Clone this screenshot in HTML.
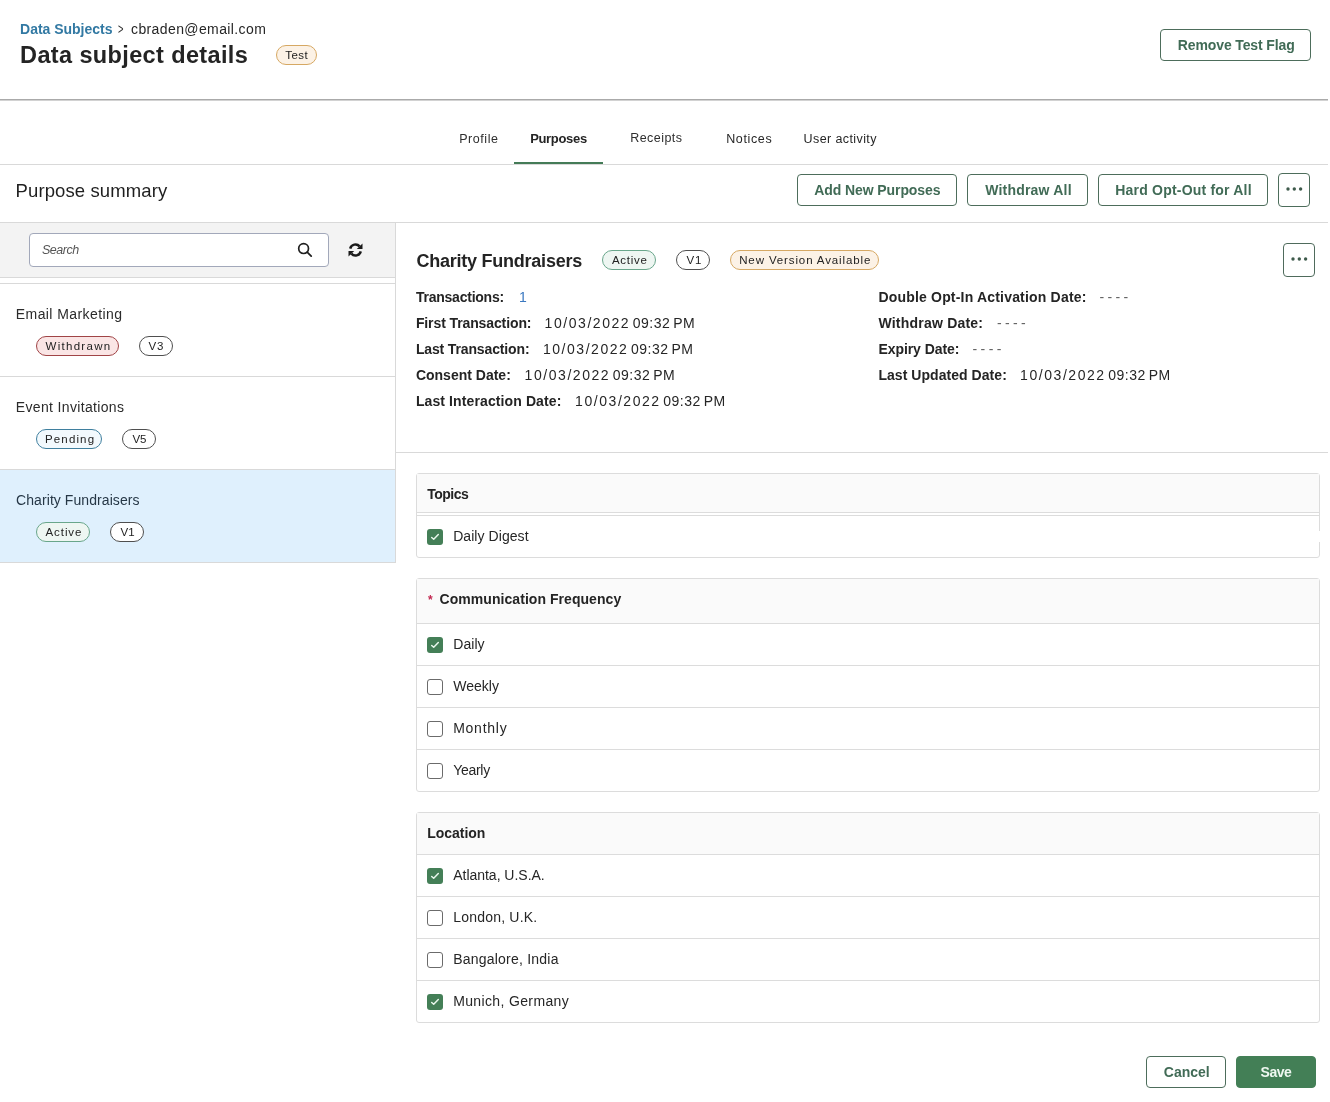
<!DOCTYPE html>
<html lang="en">
<head>
<meta charset="utf-8">
<title>Data subject details</title>
<style>
*{box-sizing:border-box;margin:0;padding:0}
html,body{width:1330px;height:1102px;background:#fff;overflow:hidden}
body{font-family:"Liberation Sans",sans-serif;color:#1c1c1c;font-size:14px;position:relative}
.abs{position:absolute}
.t{position:absolute;white-space:pre;line-height:1}
.hl{position:absolute;height:1px;background:#d9d9d9}
.btn{position:absolute;border:1px solid #4d6d5b;border-radius:4px;background:#fff}
.pill{position:absolute;height:20px;border-radius:10px;border:1px solid #4f4f4f;background:#fff}
.pill.g{border-color:#69a68b;background:#eef6f2}
.pill.r{border-color:#a04446;background:#fae5e5}
.pill.b{border-color:#3f7f9e;background:#f2f9fd}
.pill.o{border-color:#d6a863;background:#fcf2e6}
.box{position:absolute;left:416px;width:904px;border:1px solid #dcdcdc;border-radius:3px;background:#fff}
.bh{position:absolute;left:0;right:0;top:0;background:#fafafa;border-bottom:1px solid #dcdcdc}
.rowl{position:absolute;left:0;right:0;height:1px;background:#dcdcdc}
.cb{position:absolute;left:10px;width:16px;height:16px;border:1px solid #6b6b6b;border-radius:3px;background:#fff}
.cb.on{background:#447f57;border:0}
.cb.on svg{position:absolute;left:0;top:0}
#page{position:absolute;left:0;top:0;width:1330px;height:1102px;will-change:transform}
</style>
</head>
<body>
<div id="page">
<!-- header -->
<span class="t" style="left:20.1px;top:22px;font-size:14.0px;color:#3279a3;font-weight:bold;letter-spacing:-0.02px;">Data Subjects</span>
<span class="t" style="left:117.5px;top:24px;font-size:11.5px;color:#333;transform:scale(.82,1.25);transform-origin:0 50%">&gt;</span>
<span class="t" style="left:131.01px;top:22px;font-size:14px;color:#262626;letter-spacing:0.39px;">cbraden@email.com</span>
<span class="t" style="left:20.09px;top:44px;font-size:23.5px;color:#242424;font-weight:bold;letter-spacing:0.37px;">Data subject details</span>
<div class="pill o" style="left:276px;top:45px;width:41px"></div>
<span class="t" style="left:285.24px;top:50px;font-size:11.5px;color:#222;letter-spacing:0.42px;">Test</span>
<div class="btn" style="left:1160px;top:29px;width:151px;height:32px"></div>
<span class="t" style="left:1177.8px;top:38px;font-size:14.0px;color:#416b56;font-weight:bold;letter-spacing:-0.12px;">Remove Test Flag</span>
<div class="abs" style="left:0;top:99px;width:1328px;height:1px;background:#aaa"></div><div class="abs" style="left:0;top:100px;width:1328px;height:1px;background:#d2d2d2"></div>
<!-- tabs -->
<span class="t" style="left:459.2px;top:133px;font-size:12.5px;color:#2e2e2e;letter-spacing:0.56px;">Profile</span>
<span class="t" style="left:530.15px;top:132px;font-size:13.0px;color:#242424;font-weight:bold;letter-spacing:-0.32px;">Purposes</span>
<span class="t" style="left:630.2px;top:132px;font-size:12.5px;color:#2e2e2e;letter-spacing:0.45px;">Receipts</span>
<span class="t" style="left:726.2px;top:133px;font-size:12.5px;color:#262626;letter-spacing:0.63px;">Notices</span>
<span class="t" style="left:803.6px;top:133px;font-size:12.5px;color:#262626;letter-spacing:0.4px;">User activity</span>
<div class="hl" style="left:0;top:164px;width:1328px"></div>
<div class="abs" style="left:514px;top:162px;width:89px;height:2px;background:#447b57"></div>
<!-- purpose summary bar -->
<span class="t" style="left:15.56px;top:182px;font-size:18.5px;color:#1f1f1f;letter-spacing:0.11px;">Purpose summary</span>
<div class="btn" style="left:797px;top:174px;width:160px;height:32px"></div>
<span class="t" style="left:814.15px;top:183px;font-size:14.0px;color:#416b56;font-weight:bold;letter-spacing:-0.08px;">Add New Purposes</span>
<div class="btn" style="left:967px;top:174px;width:121px;height:32px"></div>
<span class="t" style="left:985.19px;top:183px;font-size:14.0px;color:#416b56;font-weight:bold;letter-spacing:0.2px;">Withdraw All</span>
<div class="btn" style="left:1098px;top:174px;width:170px;height:32px"></div>
<span class="t" style="left:1115.3px;top:183px;font-size:14.0px;color:#416b56;font-weight:bold;letter-spacing:0.2px;">Hard Opt-Out for All</span>
<div class="btn" style="left:1278px;top:173px;width:32px;height:34px"></div>
<svg class="abs" style="left:1284.7px;top:186px" width="20" height="6" viewBox="0 0 20 6"><circle cx="3" cy="3" r="1.7" fill="#3e5a4b"/><circle cx="9.3" cy="3" r="1.7" fill="#3e5a4b"/><circle cx="15.6" cy="3" r="1.7" fill="#3e5a4b"/></svg>
<div class="hl" style="left:0;top:222px;width:1328px"></div>
<!-- left panel -->
<div class="abs" style="left:0;top:223px;width:395px;height:54px;background:#f3f3f3"></div>
<div class="hl" style="left:0;top:277px;width:395px"></div>
<div class="hl" style="left:0;top:283px;width:395px"></div>
<div class="abs" style="left:395px;top:223px;width:1px;height:340px;background:#d9d9d9"></div>
<div class="abs" style="left:29px;top:233px;width:300px;height:34px;border:1px solid #a2a8ba;border-radius:4px;background:#fff"></div>
<span class="t" style="left:42.01px;top:244px;font-size:12.5px;color:#555;font-style:italic;letter-spacing:-0.49px;">Search</span>
<svg class="abs" style="left:296px;top:241px" width="18" height="18" viewBox="0 0 18 18"><circle cx="7.6" cy="7.6" r="4.9" fill="none" stroke="#1f1f1f" stroke-width="1.7"/><path d="M11.2 11.2 L15.2 15.2" stroke="#1f1f1f" stroke-width="1.7" stroke-linecap="round"/></svg>
<svg class="abs" style="left:347px;top:242px" width="17" height="16" viewBox="0 0 17 16"><g fill="none" stroke="#1a1a1a" stroke-width="2.5"><path d="M3.2 6.6 A5.4 5.4 0 0 1 12.6 4.4"/><path d="M13.8 9.4 A5.4 5.4 0 0 1 4.4 11.6"/></g><path d="M15.5 1.4 V7.1 H9.8 Z" fill="#1a1a1a"/><path d="M1.5 14.6 V8.9 H7.2 Z" fill="#1a1a1a"/></svg>
<span class="t" style="left:15.8px;top:307px;font-size:14px;color:#2b2b2b;letter-spacing:0.42px;">Email Marketing</span>
<div class="pill r" style="left:36px;top:336px;width:83px"></div>
<span class="t" style="left:45.52px;top:341px;font-size:11.5px;color:#222;letter-spacing:1.29px;">Withdrawn</span>
<div class="pill" style="left:139px;top:336px;width:34px"></div>
<span class="t" style="left:148.46px;top:341px;font-size:11.5px;color:#222;letter-spacing:0.86px;">V3</span>
<div class="hl" style="left:0;top:376px;width:395px"></div>
<span class="t" style="left:15.8px;top:400px;font-size:14px;color:#2b2b2b;letter-spacing:0.34px;">Event Invitations</span>
<div class="pill b" style="left:36px;top:429px;width:66px"></div>
<span class="t" style="left:45.0px;top:434px;font-size:11.5px;color:#222;letter-spacing:1.14px;">Pending</span>
<div class="pill" style="left:122px;top:429px;width:34px"></div>
<span class="t" style="left:132.51px;top:434px;font-size:11.5px;color:#222;letter-spacing:-0.1px;">V5</span>
<div class="hl" style="left:0;top:469px;width:395px"></div>
<div class="abs" style="left:0;top:470px;width:395px;height:92px;background:#dff0fd"></div>
<span class="t" style="left:16.08px;top:493px;font-size:14px;color:#263746;letter-spacing:0.07px;">Charity Fundraisers</span>
<div class="pill g" style="left:36px;top:522px;width:54px"></div>
<span class="t" style="left:45.5px;top:527px;font-size:11.5px;color:#222;letter-spacing:0.92px;">Active</span>
<div class="pill" style="left:110px;top:522px;width:34px"></div>
<span class="t" style="left:120.51px;top:527px;font-size:11.5px;color:#222;letter-spacing:0.05px;">V1</span>
<div class="hl" style="left:0;top:562px;width:396px"></div>
<!-- detail panel -->
<span class="t" style="left:416.48px;top:252px;font-size:18.0px;color:#242424;font-weight:bold;letter-spacing:-0.24px;">Charity Fundraisers</span>
<div class="pill g" style="left:602px;top:250px;width:54px"></div>
<span class="t" style="left:611.9px;top:255px;font-size:11.5px;color:#222;letter-spacing:0.73px;">Active</span>
<div class="pill" style="left:676px;top:250px;width:34px"></div>
<span class="t" style="left:686.51px;top:255px;font-size:11.5px;color:#222;letter-spacing:0.73px;">V1</span>
<div class="pill o" style="left:730px;top:250px;width:149px"></div>
<span class="t" style="left:739.2px;top:255px;font-size:11.5px;color:#222;letter-spacing:0.88px;">New Version Available</span>
<div class="btn" style="left:1283px;top:243px;width:32px;height:34px;border-color:#4f6b5c"></div>
<svg class="abs" style="left:1289.7px;top:256px" width="20" height="6" viewBox="0 0 20 6"><circle cx="3" cy="3" r="1.7" fill="#3e5a4b"/><circle cx="9.3" cy="3" r="1.7" fill="#3e5a4b"/><circle cx="15.6" cy="3" r="1.7" fill="#3e5a4b"/></svg>
<span class="t" style="left:415.9px;top:290px;font-size:14.0px;color:#242424;font-weight:bold;letter-spacing:-0.23px;">Transactions:</span>
<span class="t" style="left:415.9px;top:316px;font-size:14.0px;color:#242424;font-weight:bold;letter-spacing:-0.11px;">First Transaction:</span>
<span class="t" style="left:415.9px;top:342px;font-size:14.0px;color:#242424;font-weight:bold;letter-spacing:-0.14px;">Last Transaction:</span>
<span class="t" style="left:415.9px;top:368px;font-size:14.0px;color:#242424;font-weight:bold;">Consent Date:</span>
<span class="t" style="left:415.9px;top:394px;font-size:14.0px;color:#242424;font-weight:bold;letter-spacing:0.11px;">Last Interaction Date:</span>
<span class="t" style="left:878.4px;top:290px;font-size:14.0px;color:#242424;font-weight:bold;letter-spacing:0.19px;">Double Opt-In Activation Date:</span>
<span class="t" style="left:878.4px;top:316px;font-size:14.0px;color:#242424;font-weight:bold;letter-spacing:0.22px;">Withdraw Date:</span>
<span class="t" style="left:878.4px;top:342px;font-size:14.0px;color:#242424;font-weight:bold;letter-spacing:-0.06px;">Expiry Date:</span>
<span class="t" style="left:878.4px;top:368px;font-size:14.0px;color:#242424;font-weight:bold;letter-spacing:0.05px;">Last Updated Date:</span>
<span class="t" style="left:519.1px;top:290px;font-size:14px;color:#3a78c0;">1</span>
<span class="t" style="left:544.6px;top:316px;font-size:14px;color:#262626;word-spacing:-1.4px"><span style="letter-spacing:1.55px">10/03/2022</span> <span style="letter-spacing:.5px">09:32 PM</span></span>
<span class="t" style="left:542.9px;top:342px;font-size:14px;color:#262626;word-spacing:-1.4px"><span style="letter-spacing:1.55px">10/03/2022</span> <span style="letter-spacing:.5px">09:32 PM</span></span>
<span class="t" style="left:524.6px;top:368px;font-size:14px;color:#262626;word-spacing:-1.4px"><span style="letter-spacing:1.55px">10/03/2022</span> <span style="letter-spacing:.5px">09:32 PM</span></span>
<span class="t" style="left:575.1px;top:394px;font-size:14px;color:#262626;word-spacing:-1.4px"><span style="letter-spacing:1.55px">10/03/2022</span> <span style="letter-spacing:.5px">09:32 PM</span></span>
<span class="t" style="left:1020.1px;top:368px;font-size:14px;color:#262626;word-spacing:-1.4px"><span style="letter-spacing:1.55px">10/03/2022</span> <span style="letter-spacing:.5px">09:32 PM</span></span>
<span class="t" style="left:1099.53px;top:290px;font-size:14px;color:#666;letter-spacing:-0.29px;">- - - -</span>
<span class="t" style="left:997.03px;top:316px;font-size:14px;color:#666;letter-spacing:-0.29px;">- - - -</span>
<span class="t" style="left:972.53px;top:342px;font-size:14px;color:#666;letter-spacing:-0.23px;">- - - -</span>
<div class="hl" style="left:396px;top:452px;width:932px"></div>
<!-- Topics -->
<div class="box" style="top:473px;height:85px"><div class="bh" style="height:39px"></div><div class="rowl" style="top:41px"></div><div class="cb on" style="top:55px"><svg width="16" height="16" viewBox="0 0 16 16"><path d="M4.7 8.5 L6.7 10.3 L11.3 5.6" fill="none" stroke="#e9f7ec" stroke-width="1.5" stroke-linecap="round" stroke-linejoin="round"/></svg></div></div>
<div class="abs" style="left:1319px;top:531px;width:1px;height:11px;background:#fff"></div>
<span class="t" style="left:427.3px;top:487px;font-size:14.0px;color:#242424;font-weight:bold;letter-spacing:-0.53px;">Topics</span>
<span class="t" style="left:453.2px;top:529px;font-size:14px;color:#262626;letter-spacing:0.06px;">Daily Digest</span>
<!-- Communication Frequency -->
<div class="box" style="top:578px;height:214px"><div class="bh" style="height:45px"></div><div class="rowl" style="top:86px"></div><div class="rowl" style="top:128px"></div><div class="rowl" style="top:170px"></div><div class="cb on" style="top:58px"><svg width="16" height="16" viewBox="0 0 16 16"><path d="M4.7 8.5 L6.7 10.3 L11.3 5.6" fill="none" stroke="#e9f7ec" stroke-width="1.5" stroke-linecap="round" stroke-linejoin="round"/></svg></div><div class="cb" style="top:100px"></div><div class="cb" style="top:142px"></div><div class="cb" style="top:184px"></div></div>
<span class="t" style="left:427.94px;top:594px;font-size:12.0px;color:#c2264f;font-weight:bold;">*</span>
<span class="t" style="left:439.62px;top:592px;font-size:14.0px;color:#242424;font-weight:bold;letter-spacing:0.05px;">Communication Frequency</span>
<span class="t" style="left:453.2px;top:637px;font-size:14px;color:#262626;letter-spacing:0.08px;">Daily</span>
<span class="t" style="left:453.2px;top:679px;font-size:14px;color:#262626;letter-spacing:0.02px;">Weekly</span>
<span class="t" style="left:453.2px;top:721px;font-size:14px;color:#262626;letter-spacing:0.74px;">Monthly</span>
<span class="t" style="left:453.2px;top:763px;font-size:14px;color:#262626;letter-spacing:-0.29px;">Yearly</span>
<!-- Location -->
<div class="box" style="top:812px;height:211px"><div class="bh" style="height:42px"></div><div class="rowl" style="top:83px"></div><div class="rowl" style="top:125px"></div><div class="rowl" style="top:167px"></div><div class="cb on" style="top:55px"><svg width="16" height="16" viewBox="0 0 16 16"><path d="M4.7 8.5 L6.7 10.3 L11.3 5.6" fill="none" stroke="#e9f7ec" stroke-width="1.5" stroke-linecap="round" stroke-linejoin="round"/></svg></div><div class="cb" style="top:97px"></div><div class="cb" style="top:139px"></div><div class="cb on" style="top:181px"><svg width="16" height="16" viewBox="0 0 16 16"><path d="M4.7 8.5 L6.7 10.3 L11.3 5.6" fill="none" stroke="#e9f7ec" stroke-width="1.5" stroke-linecap="round" stroke-linejoin="round"/></svg></div></div>
<span class="t" style="left:427.3px;top:826px;font-size:14.0px;color:#242424;font-weight:bold;letter-spacing:-0.04px;">Location</span>
<span class="t" style="left:453.2px;top:868px;font-size:14px;color:#262626;letter-spacing:-0.02px;">Atlanta, U.S.A.</span>
<span class="t" style="left:453.2px;top:910px;font-size:14px;color:#262626;letter-spacing:0.21px;">London, U.K.</span>
<span class="t" style="left:453.2px;top:952px;font-size:14px;color:#262626;letter-spacing:0.22px;">Bangalore, India</span>
<span class="t" style="left:453.2px;top:994px;font-size:14px;color:#262626;letter-spacing:0.36px;">Munich, Germany</span>
<!-- footer buttons -->
<div class="btn" style="left:1146px;top:1056px;width:80px;height:32px"></div>
<span class="t" style="left:1163.82px;top:1065px;font-size:14.0px;color:#416b56;font-weight:bold;letter-spacing:-0.04px;">Cancel</span>
<div class="btn" style="left:1236px;top:1056px;width:80px;height:32px;background:#437f56;border-color:#437f56"></div>
<span class="t" style="left:1260.51px;top:1065px;font-size:14.0px;color:#eef7f0;font-weight:bold;letter-spacing:-0.45px;">Save</span>
</div>
</body>
</html>
